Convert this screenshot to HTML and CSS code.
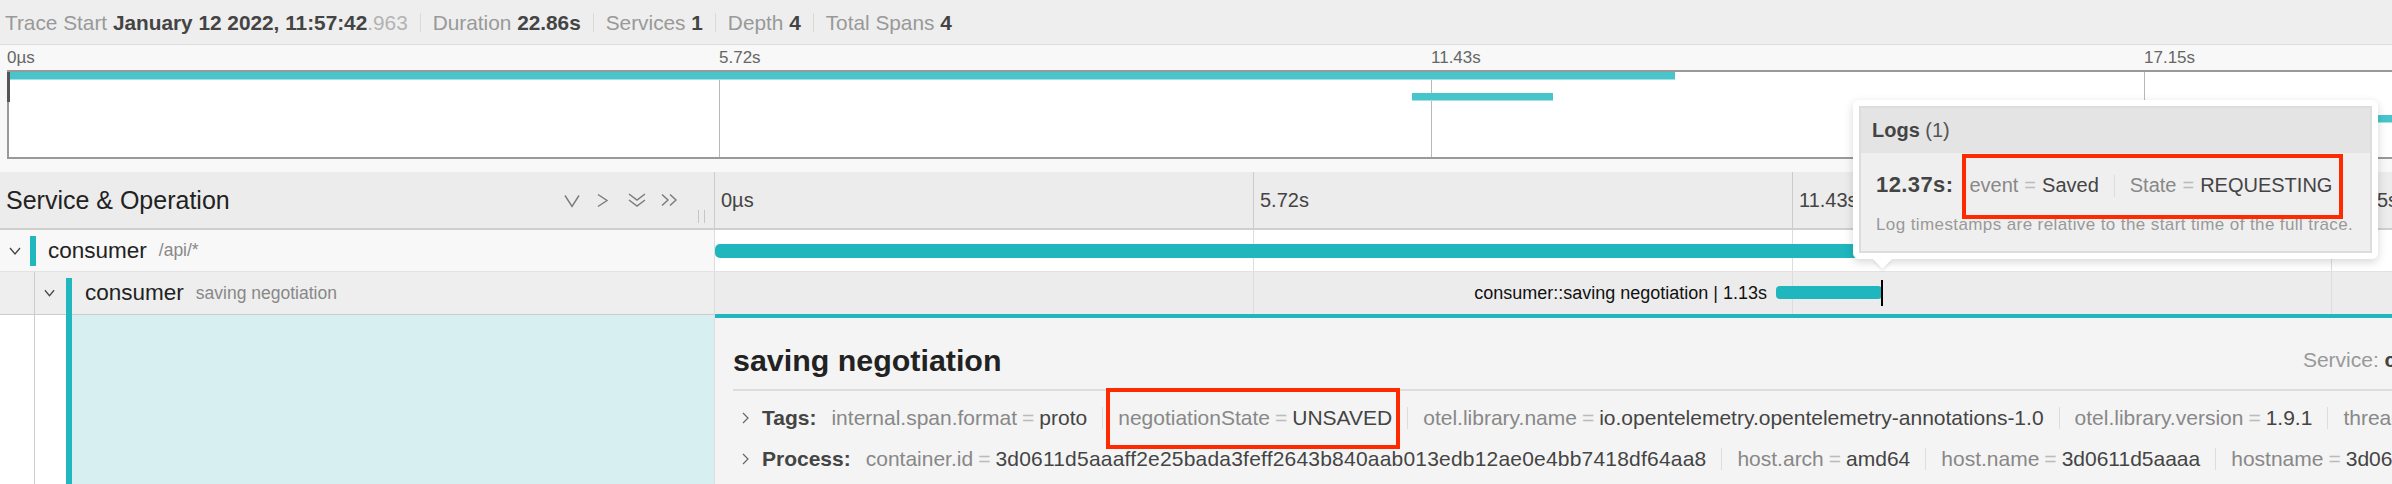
FILE: index.html
```html
<!DOCTYPE html>
<html lang="en">
<head>
<meta charset="utf-8">
<title>Trace</title>
<link rel="stylesheet" href="styles.css">
</head>
<body>
<div class="page">
  <header class="trace-header">
    <div class="h-item"><span>Trace Start</span> <b>January 12 2022, 11:57:42</b><span class="h-ms">.963</span></div>
    <div class="h-item"><span>Duration</span> <b>22.86s</b></div>
    <div class="h-item"><span>Services</span> <b>1</b></div>
    <div class="h-item"><span>Depth</span> <b>4</b></div>
    <div class="h-item"><span>Total Spans</span> <b>4</b></div>
  </header>

  <section class="minimap">
    <div class="mm-ticks"><span>0µs</span><span>5.72s</span><span>11.43s</span><span>17.15s</span></div>
    <div class="mm-canvas">
      <div class="mm-grid"><i></i><i></i><i></i><i></i></div>
      <div class="mm-bar" style="left:0;width:1666px;top:0"></div>
      <div class="mm-bar" style="left:1403px;width:141px;top:21px"></div>
      <div class="mm-bar" style="left:2366px;width:180px;top:43px"></div>
      <div class="mm-bar" style="left:2560px;width:120px;top:64px"></div>
      <div class="mm-handle"></div>
    </div>
  </section>

  <div class="tl-header">
    <div class="tl-left">
      <h3 class="tl-title">Service &amp; Operation</h3>
      <div class="ctrls">
        <svg viewBox="0 0 32 16"><polyline points="9,3.5 16,14.5 23,3.5"/></svg>
        <svg viewBox="0 0 32 16"><polyline points="10,2.5 19,8.5 10,14.5"/></svg>
        <svg viewBox="0 0 32 16"><polyline points="9,2 17,8 25,2"/><polyline points="9,8 17,14 25,8"/></svg>
        <svg viewBox="0 0 32 16"><polyline points="10,2.5 16,8 10,13.5"/><polyline points="18,2.5 24,8 18,13.5"/></svg>
      </div>
      <div class="resizer"></div>
    </div>
    <div class="tl-ticks"><span>0µs</span><span>5.72s</span><span>11.43s</span><span>17.15s</span></div>
  </div>

  <div class="row">
    <div class="row-left r1-left">
      <svg class="tog" viewBox="0 0 12 8"><polyline points="1,1 6,7 11,1"/></svg>
      <span class="svc-bar"></span>
      <span class="svc">consumer</span><span class="op">/api/*</span>
    </div>
    <div class="row-right r1-right">
      <div class="tl-grid"><i></i><i></i><i></i><i></i></div>
      <div class="span-bar" style="left:0;width:1263px"></div>
    </div>
  </div>

  <div class="row">
    <div class="row-left r2-left">
      <span class="guide"></span>
      <svg class="tog tog2" viewBox="0 0 12 8"><polyline points="1,1 6,7 11,1"/></svg>
      <span class="svc-bar svc-bar2"></span>
      <span class="svc svc2">consumer</span><span class="op">saving negotiation</span>
    </div>
    <div class="row-right r2-right">
      <div class="tl-grid"><i></i><i></i><i></i><i></i></div>
      <div class="span-bar span-bar2" style="left:1061px;width:106px">
        <span class="span-label">consumer::saving negotiation | 1.13s</span>
        <span class="log-mark"></span>
      </div>
    </div>
  </div>

  <div class="detail-row">
    <div class="d-left">
      <span class="d-guide"></span>
      <span class="d-gap"></span>
      <span class="d-bar"></span>
      <span class="d-fill"></span>
    </div>
    <div class="d-right">
      <div class="d-title">
        <h2>saving negotiation</h2>
        <div class="d-meta">
          <span class="m-item">Service: <b>consumer</b></span>
          <span class="m-item">Duration: <b>1.13s</b></span>
          <span class="m-item">Start Time: <b>11.28s</b></span>
        </div>
      </div>
      <div class="kv-row kv-first">
        <svg class="kv-tog" viewBox="0 0 7 12"><polyline points="1,1 6,6 1,11"/></svg>
        <b class="kv-label">Tags:</b>
        <span class="kv first"><span class="k">internal.span.format</span><span class="eq">=</span><span class="v">proto</span></span>
        <span class="kv"><span class="hl"><span class="k">negotiationState</span><span class="eq">=</span><span class="v">UNSAVED</span></span></span>
        <span class="kv"><span class="k">otel.library.name</span><span class="eq">=</span><span class="v">io.opentelemetry.opentelemetry-annotations-1.0</span></span>
        <span class="kv"><span class="k">otel.library.version</span><span class="eq">=</span><span class="v">1.9.1</span></span>
        <span class="kv"><span class="k">thread.id</span><span class="eq">=</span><span class="v">1</span></span>
      </div>
      <div class="kv-row">
        <svg class="kv-tog" viewBox="0 0 7 12"><polyline points="1,1 6,6 1,11"/></svg>
        <b class="kv-label">Process:</b>
        <span class="kv first"><span class="k">container.id</span><span class="eq">=</span><span class="v hash">3d0611d5aaaff2e25bada3feff2643b840aab013edb12ae0e4bb7418df64aa8</span></span>
        <span class="kv"><span class="k">host.arch</span><span class="eq">=</span><span class="v">amd64</span></span>
        <span class="kv"><span class="k">host.name</span><span class="eq">=</span><span class="v">3d0611d5aaaa</span></span>
        <span class="kv"><span class="k">hostname</span><span class="eq">=</span><span class="v">3d0611d5aaaa</span></span>
      </div>
    </div>
  </div>

  <div class="popover">
    <span class="pop-arrow"></span>
    <div class="pop-inner">
      <div class="pop-head"><b>Logs</b>&nbsp;(1)</div>
      <div class="pop-body">
        <div class="log-line">
          <span class="log-time">12.37s:</span>
          <span class="log-fields hl-pop">
            <span class="k">event</span><span class="eq">=</span><span class="v">Saved</span><span class="lsep"></span><span class="k">State</span><span class="eq">=</span><span class="v">REQUESTING</span>
          </span>
        </div>
        <div class="foot">Log timestamps are relative to the start time of the full trace.</div>
      </div>
    </div>
  </div>
</div>
</body>
</html>
```
FILE: styles.css
```css
* { box-sizing: border-box; }
html, body { margin: 0; }
body {
  width: 2392px;
  height: 484px;
  overflow: hidden;
  background: #fff;
  font-family: "Liberation Sans", Arial, sans-serif;
  color: #333;
}
.page { width: 2871px; position: relative; }

/* header */
.trace-header {
  display: flex;
  align-items: center;
  height: 45px;
  padding-left: 5px;
  background: #eee;
  border-bottom: 1px solid #dedede;
  font-size: 20.8px;
  color: #999;
  white-space: nowrap;
}
.h-item { padding: 0 12px; line-height: 19px; border-left: 1px solid #dadada; }
.h-item:first-child { padding-left: 0; border-left: 0; }
.h-item b { color: #444; }
.h-ms { color: #b3b3b3; }

/* minimap */
.minimap { background: #f8f8f8; padding: 0 0 13px 7px; }
.mm-ticks {
  display: grid;
  grid-template-columns: 712px 712px 713px 712px;
  height: 25px;
  align-items: center;
  font-size: 17px;
  color: #666;
  line-height: 1;
}
.mm-canvas {
  position: relative;
  width: 2848px;
  height: 89px;
  border-top: 2px solid #999;
  border-bottom: 2px solid #999;
  border-left: 2px solid #999;
  background: #fff;
}
.mm-grid { display: grid; grid-template-columns: 710px 712px 713px 712px; height: 100%; }
.mm-grid i + i { border-left: 1px solid #b8b8b8; }
.mm-bar { position: absolute; height: 8px; background: #48c5cb; border-bottom: 1px solid #a4e1e4; }
.mm-handle { position: absolute; left: -2px; top: 0; width: 3px; height: 30px; background: #555; }

/* timeline header */
.tl-header { display: flex; height: 58px; background: #ececec; border-bottom: 2px solid #cfcfcf; }
.tl-left {
  width: 715px;
  flex: none;
  display: flex;
  align-items: center;
  padding-left: 6px;
  border-right: 1px solid #ccc;
}
.tl-title { margin: 0; font-size: 25px; font-weight: 400; color: #222; }
.ctrls { margin-left: auto; display: flex; }
.ctrls svg { width: 32px; height: 16px; display: block; fill: none; stroke: #7a7a7a; stroke-width: 1.4; }
.resizer {
  align-self: flex-end;
  margin: 0 9px 5px 14px;
  width: 7px;
  height: 13px;
  border-left: 1px solid #c6c6c6;
  border-right: 1px solid #c6c6c6;
}
.tl-ticks { display: grid; grid-template-columns: 538px 539px 539px 539px; flex: none; }
.tl-ticks span { display: flex; align-items: center; padding-left: 6px; font-size: 20px; color: #444; }
.tl-ticks span + span { border-left: 1px solid #ccc; }

/* rows */
.row { display: flex; height: 42px; }
.row-left { width: 715px; flex: none; display: flex; align-items: center; border-right: 1px solid #ddd; }
.r1-left { background: #f8f8f8; padding-left: 9px; border-bottom: 1px solid #e2e2e2; }
.r2-left { background: #eee; }
.tog { width: 12px; height: 8px; flex: none; fill: none; stroke: #444; stroke-width: 1.3; }
.tog2 { width: 11px; margin-left: 9px; }
.svc-bar { width: 6px; height: 30px; margin-left: 9px; background: #20b7bf; flex: none; }
.svc-bar2 { margin-left: 11px; height: auto; align-self: stretch; margin-top: 6px; }
.svc { margin-left: 12px; font-size: 22.5px; color: #222; }
.svc2 { margin-left: 13px; }
.op { margin-left: 12px; font-size: 17.5px; color: #888; }
.guide { width: 35px; align-self: stretch; border-right: 1px solid #ccc; flex: none; }

.row-right { width: 2156px; flex: none; position: relative; }
.r1-right { background: #fff; border-bottom: 1px solid #e2e2e2; }
.r2-right { background: #ececec; }
.tl-grid { display: grid; grid-template-columns: 538px 539px 539px 539px; height: 100%; }
.tl-grid i + i { border-left: 1px solid #ddd; }
.span-bar { position: absolute; top: 14px; height: 14px; background: #1fb6bd; border-radius: 5px; }
.span-bar2 { height: 13px; border-radius: 4px; }
.span-label {
  position: absolute;
  right: 100%;
  margin-right: 9px;
  top: 50%;
  transform: translateY(-50%);
  line-height: 20px;
  font-size: 18px;
  color: #111;
  white-space: nowrap;
}
.log-mark { position: absolute; left: calc(100% - 1px); top: -6px; width: 2px; height: 26px; background: #000; }

/* detail */
.detail-row { display: flex; height: 170px; }
.d-left { width: 715px; flex: none; display: flex; border-right: 1px solid #ddd; }
.d-guide { width: 35px; flex: none; border-right: 1px solid #ccc; border-top: 1px solid #ccc; }
.d-gap { width: 31px; flex: none; border-top: 1px solid #ccc; }
.d-bar { width: 6px; flex: none; background: #20b7bf; }
.d-fill { flex: 1; background: #d8eff2; border-top: 1px solid #ccc; }
.d-right {
  width: 2156px;
  flex: none;
  background: #f4f4f4;
  border-top: 4px solid #1fb6bd;
  padding: 0 0 0 18px;
}
.d-title {
  display: flex;
  align-items: center;
  height: 73px;
  padding-top: 13px;
  border-bottom: 2px solid #ddd;
}
.d-title h2 { margin: 0; font-size: 30.4px; font-weight: 700; color: #222; }
.d-meta { margin-left: auto; display: flex; font-size: 21px; color: #999; white-space: nowrap; }
.m-item { padding: 0 15px; border-left: 1px solid #ddd; }
.m-item:first-child { border-left: 0; }
.m-item:last-child { padding-right: 10px; }
.m-item b { color: #444; }

.kv-row { display: flex; align-items: center; height: 41px; font-size: 21px; white-space: nowrap; }
.kv-first { margin-top: 6px; }
.kv-tog { width: 7px; height: 12px; margin-left: 9px; flex: none; fill: none; stroke: #666; stroke-width: 1.2; }
.kv-label { margin-left: 13px; margin-right: 15px; color: #444; }
.kv { padding: 0 15px; border-left: 1px solid #ddd; line-height: 22px; }
.kv.first { padding-left: 0; border-left: 0; }
.k { color: #888; }
.eq { color: #bbb; padding: 0 5px; }
.v { color: #444; }
.hash { letter-spacing: 0.2px; }
.hl { position: relative; display: inline-block; line-height: 22px; }
.hl::after {
  content: "";
  position: absolute;
  left: -12px;
  right: -8px;
  top: -19px;
  height: 53px;
  border: 4px solid #ff2a00;
}

/* popover */
.popover {
  position: absolute;
  left: 1853px;
  top: 100px;
  width: 525px;
  height: 159px;
  background: #fff;
  border-radius: 6px;
  padding: 6px;
  box-shadow: 0 3px 10px rgba(0, 0, 0, 0.16);
}
.pop-arrow {
  position: absolute;
  left: 23px;
  bottom: -7px;
  width: 13px;
  height: 13px;
  background: #fff;
  transform: rotate(45deg);
  box-shadow: 2px 2px 3px rgba(0, 0, 0, 0.07);
}
.pop-inner { position: relative; height: 100%; border: 2px solid #ddd; background: #efefef; }
.pop-head {
  display: flex;
  align-items: center;
  height: 45px;
  padding-left: 11px;
  background: #e4e4e4;
  font-size: 20px;
  color: #555;
}
.pop-head b { color: #444; }
.pop-body { padding: 12px 0 0 15px; }
.log-line { display: flex; align-items: center; height: 40px; white-space: nowrap; }
.log-time { font-weight: 700; font-size: 22px; color: #444; margin-right: 16px; letter-spacing: 0.4px; }
.log-fields { position: relative; display: inline-block; font-size: 20px; line-height: 24px; }
.log-fields .eq { padding: 0 6px; }
.lsep { display: inline-block; width: 1px; height: 22px; background: #ddd; margin: 0 15px; vertical-align: middle; }
.hl-pop::after {
  content: "";
  position: absolute;
  left: -7px;
  right: -11px;
  top: -19px;
  height: 57px;
  border: 4px solid #ff2a00;
}
.foot { margin-top: 10px; font-size: 17px; letter-spacing: 0.4px; line-height: 20px; color: #999; white-space: nowrap; }
```
